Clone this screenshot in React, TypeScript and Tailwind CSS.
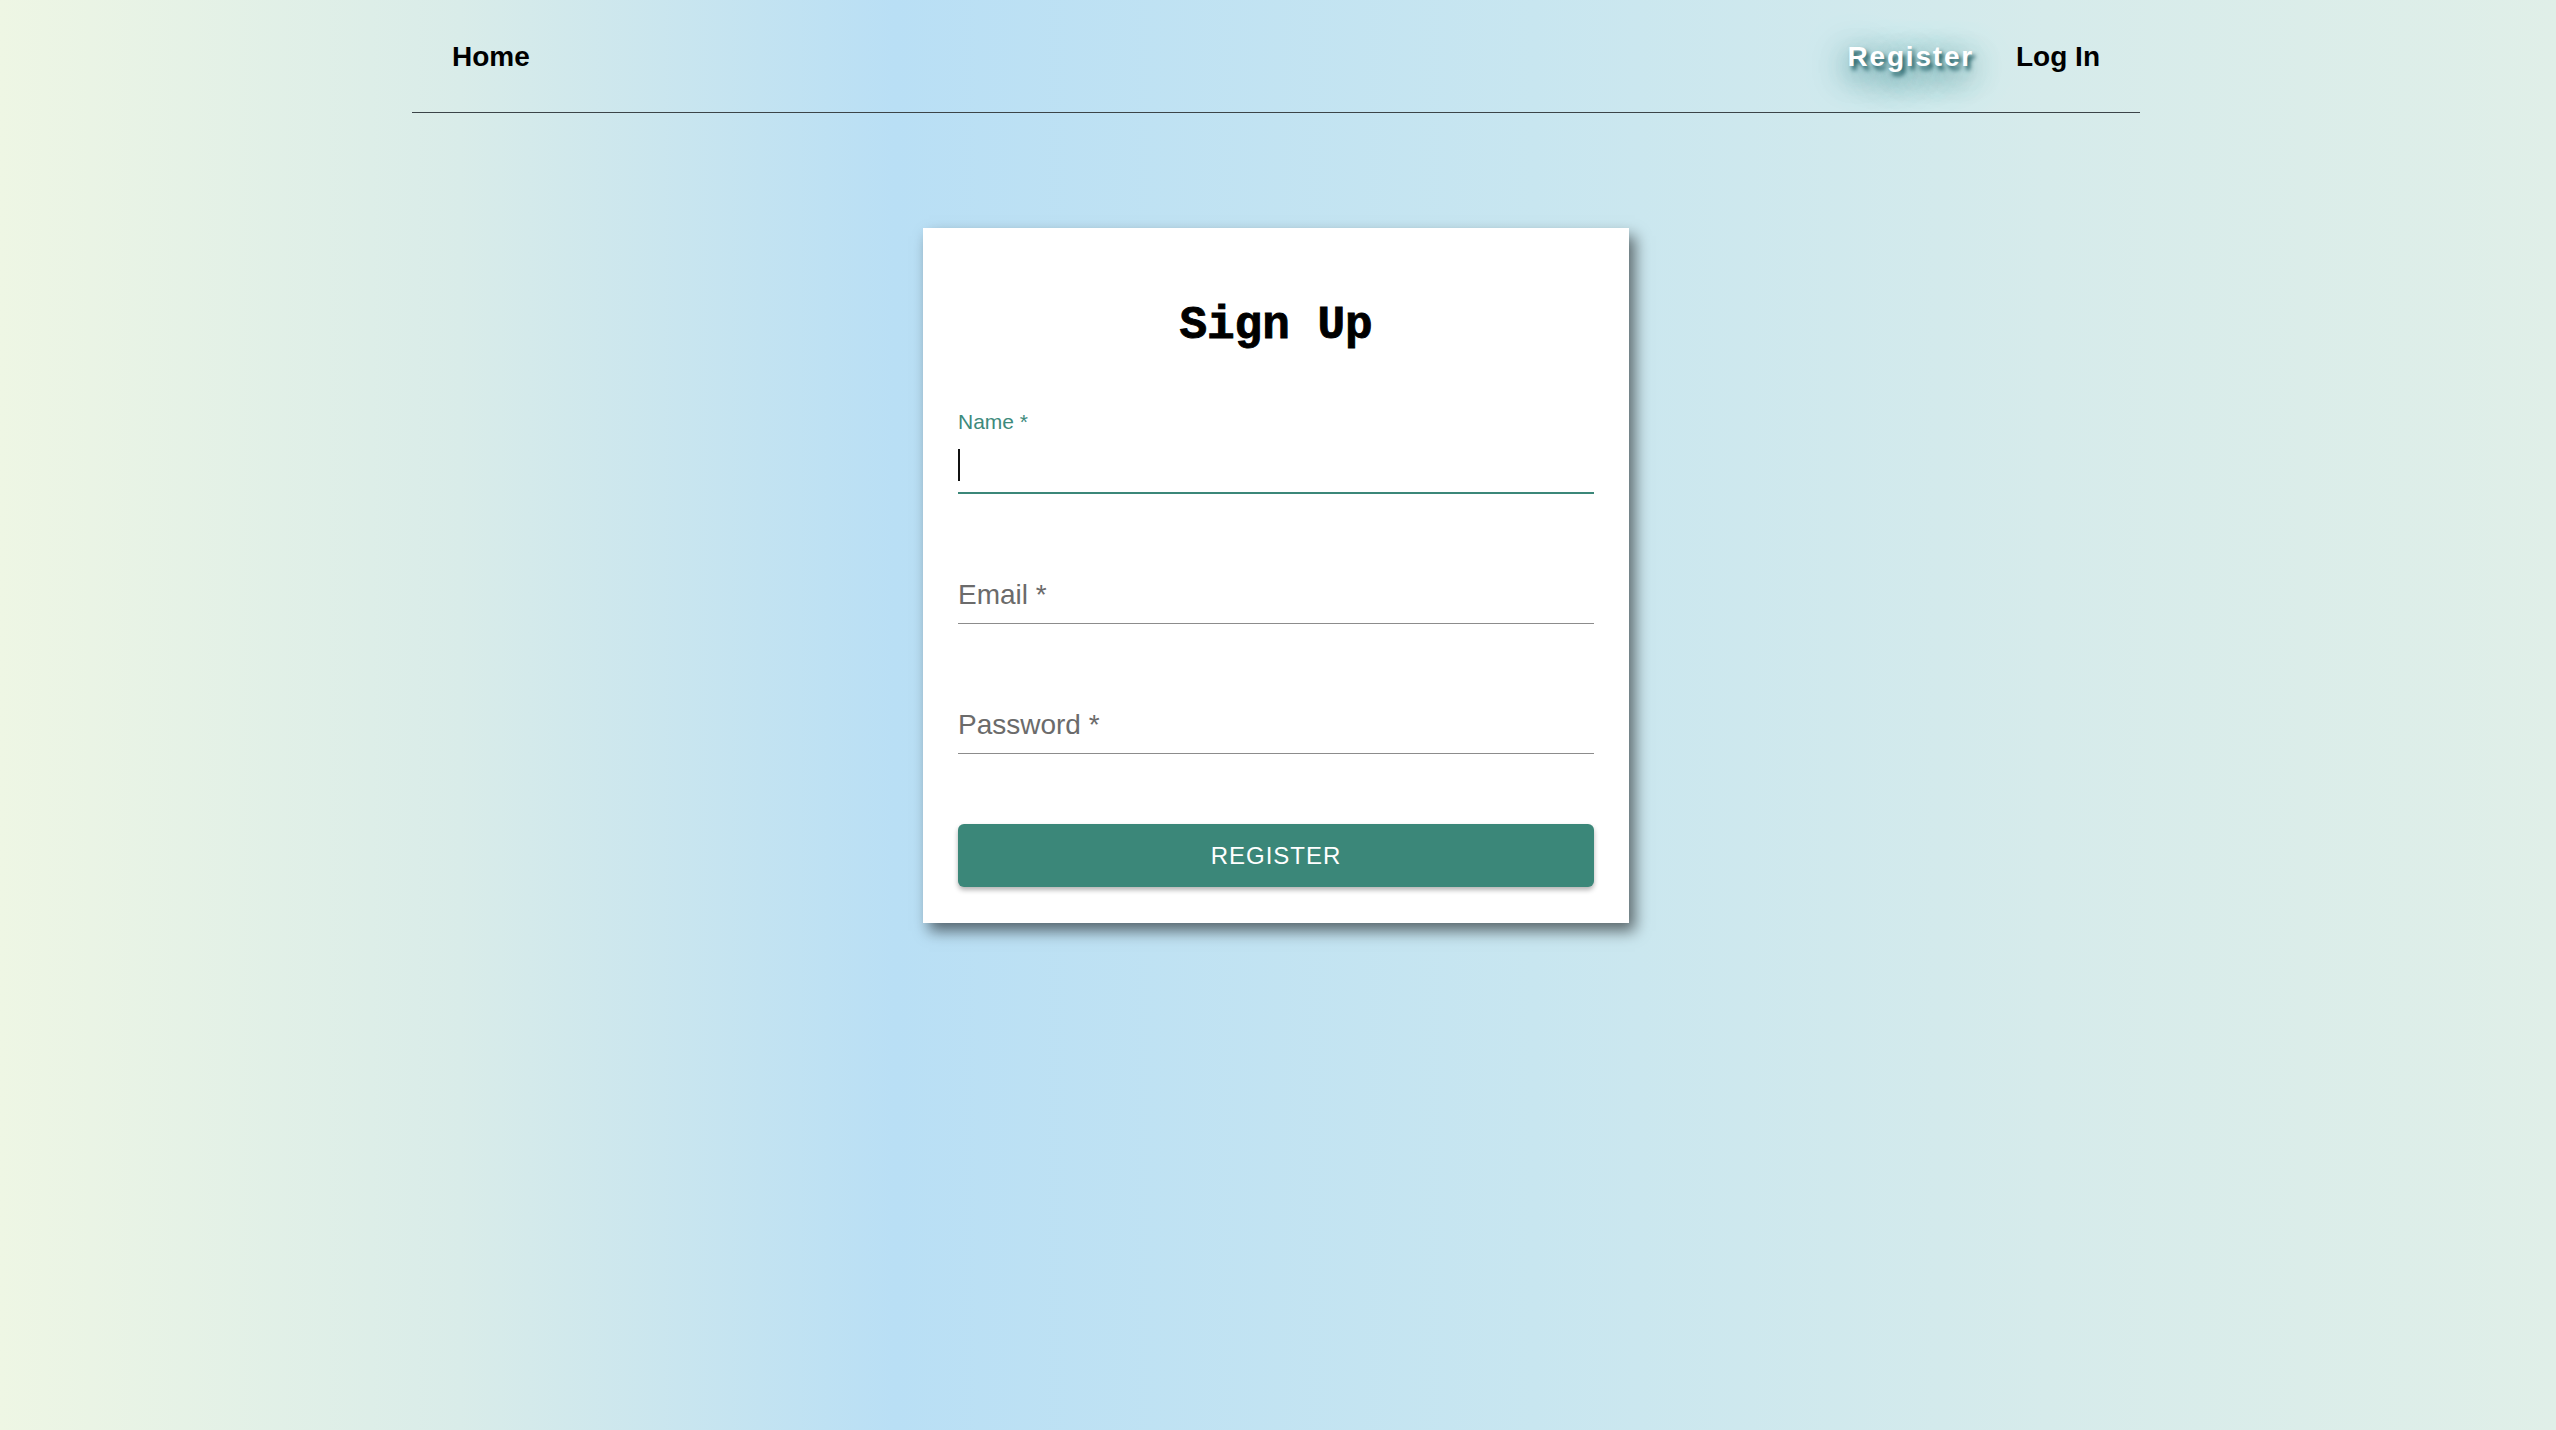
import React from "react";

const sans = { fontFamily: '"Liberation Sans", Arial, sans-serif' };

function NavBar() {
  return (
    <div className="flex justify-center pr-[4px]">
      <nav className="flex h-[113px] w-[1728px] items-center justify-between border-b border-[#3b4448] px-10 pt-[2px]">
        <a className="text-[28px] font-bold text-black">Home</a>
        <div className="flex items-center gap-[42px]">
          <a className="text-[28px] font-bold tracking-[1.8px] text-white [text-shadow:3px_4px_4px_#1e5c63,0_10px_40px_#2f8088,0_10px_26px_rgba(47,128,136,0.7)]">
            Register
          </a>
          <a className="text-[28px] font-bold text-black">Log In</a>
        </div>
      </nav>
    </div>
  );
}

function Field({ label }: { label: string }) {
  return (
    <div className="mt-[85px] border-b border-[#8c8c8c] pb-[12px]">
      <div className="h-[32px] text-[28px] leading-[32px] text-[#6b6b6b]">
        {label} *
      </div>
    </div>
  );
}

function SignUpCard() {
  return (
    <div className="flex justify-center pr-[4px]">
      <div className="mt-[115px] w-[706px] bg-white px-[35px] pt-[72px] pb-[36px] shadow-[6px_8px_14px_rgba(0,0,0,0.55)]">
        <h1 className="text-center font-['Liberation_Mono',monospace] text-[46px] leading-[52px] font-bold text-black [-webkit-text-stroke:0.9px_#000]">
          Sign Up
        </h1>

        {/* focused field */}
        <div className="mt-[58px]">
          <div className="h-[24px] text-[21px] leading-[24px] text-[#3d8a7c]">Name *</div>
          <div className="border-b-2 border-[#3b8779] pt-[15px] pb-[11px]">
            <div className="h-[32px] w-[2px] bg-[#111]" />
          </div>
        </div>

        <Field label="Email" />
        <Field label="Password" />

        <button className="mt-[70px] flex h-[63px] w-full items-center justify-center rounded-[6px] bg-[#3b8779] text-[24px] tracking-[1px] text-white shadow-[0_3px_5px_rgba(0,0,0,0.3)]">
          REGISTER
        </button>
      </div>
    </div>
  );
}

export default function App() {
  return (
    <div
      className="min-h-screen bg-[linear-gradient(to_right,#eef6e4_0%,#d9ece9_18%,#b9dff5_35%,#c8e6f0_60%,#d6ebeb_80%,#e0efe8_100%)]"
      style={sans}
    >
      <NavBar />
      <SignUpCard />
    </div>
  );
}
